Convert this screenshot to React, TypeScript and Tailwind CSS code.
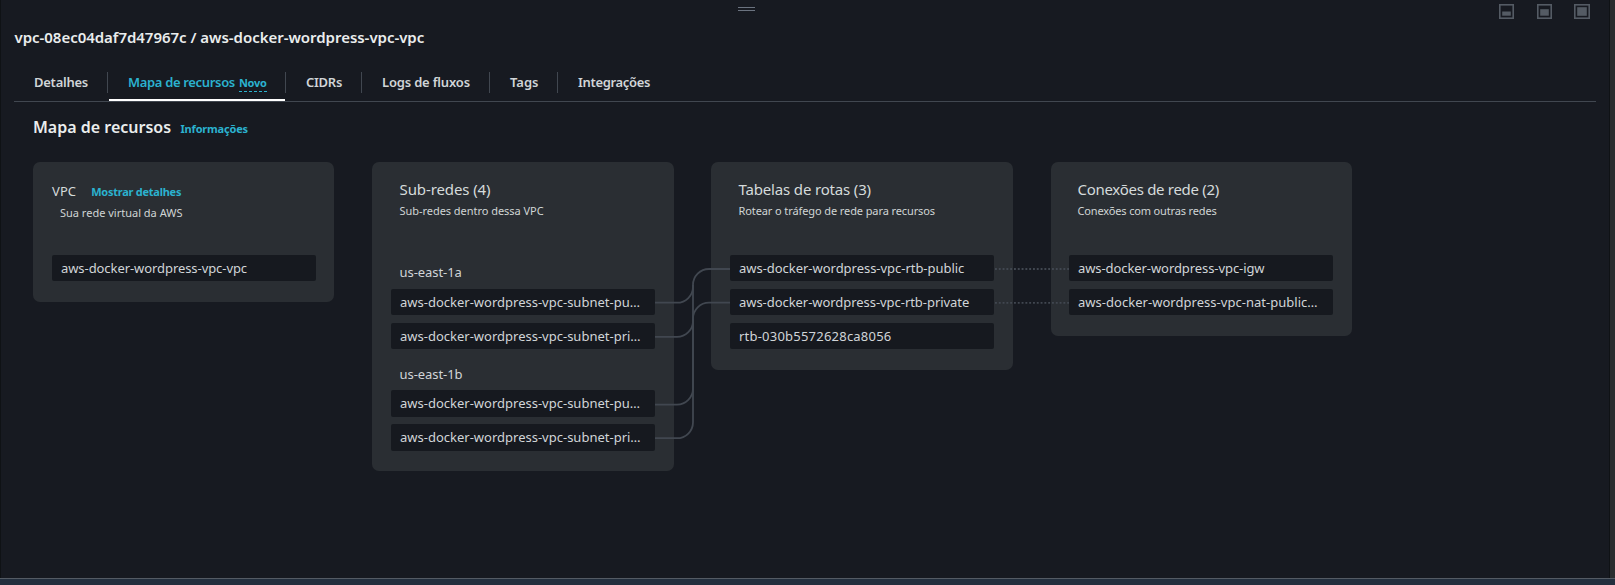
import type { ReactNode } from "react";

type Row = { text: string; h?: string; ls: string };

function Item({ text, ls, h = "h-[26px]" }: Row) {
  return (
    <div className={`${h} ${ls} flex items-center whitespace-nowrap rounded-[2px] bg-[#16191f] pl-[9px] text-[13px] leading-[18px] text-[#d1d5d8]`}>
      {text}
    </div>
  );
}

type CardProps = { title: string; titleLs: string; sub: string; subLs: string; size: string; children: ReactNode };

function Card({ title, titleLs, sub, subLs, size, children }: CardProps) {
  return (
    <section className={`${size} rounded-[7px] bg-[#2a2e33] pr-[19px] pt-[16px]`}>
      <div className="h-[77px] pl-[8.5px]">
        <h3 className={`${titleLs} whitespace-nowrap text-[15px] leading-[22px] text-[#d5dbdb]`}>{title}</h3>
        <p className={`${subLs} mt-[2px] whitespace-nowrap text-[11px] leading-[18px] text-[#d0d5d5]`}>{sub}</p>
      </div>
      {children}
    </section>
  );
}

const tabs = [
  { label: "Detalhes", w: "w-[94px]", ls: "tracking-[-0.25px]" },
  { label: "Mapa de recursos", w: "w-[178px]", ls: "tracking-[-0.33px]", active: true },
  { label: "CIDRs", w: "w-[76px]", ls: "tracking-[-0.25px]" },
  { label: "Logs de fluxos", w: "w-[128px]", ls: "tracking-[-0.18px]" },
  { label: "Tags", w: "w-[68px]", ls: "tracking-normal" },
  { label: "Integrações", w: "w-[92px]", ls: "tracking-[-0.33px]", last: true },
];

function SizeIcon({ y, h, w = 15 }: { y: number; h: number; w?: number }) {
  return (
    <svg width={w} height="15" viewBox={`0 0 ${w} 15`}>
      <rect x="0.8" y="0.8" width={w - 1.6} height="13.4" fill="none" stroke="#545b64" strokeWidth="1.6" />
      <rect x="3.2" y={y} width={w - 6.4} height={h} fill="#545b64" />
    </svg>
  );
}

function Links() {
  return (
    <svg className="pointer-events-none absolute left-[655px] top-[162px]" width="414" height="309" viewBox="655 162 414 309" fill="none" stroke="#414750" strokeWidth="1.8">
      <path d="M655 302.7H677A16 16 0 0 0 693 286.7V285A16 16 0 0 1 709 269H730" />
      <path d="M655 336.9H677A16 16 0 0 0 693 320.9V318.7A16 16 0 0 1 709 302.7H730" />
      <path d="M655 404.6H677A16 16 0 0 0 693 388.6V285" />
      <path d="M655 438.2H677A16 16 0 0 0 693 422.2V318.7" />
      <path d="M995 269H1069M995 302.8H1069" strokeDasharray="1.9 1.9" />
    </svg>
  );
}

export default function App() {
  return (
    <div className="relative flex h-[585px] w-[1615px] flex-col overflow-hidden bg-[#16191f] font-['Noto_Sans',sans-serif]">
      <div className="flex h-[578px]">
        <main className="h-full w-[1610px] border-l border-r border-[#0f1215] bg-[#171a21] pl-[13px]">
          <div className="flex h-[24px] justify-between">
            <div className="ml-[724px] mt-[7px] h-[4px] w-[17px] border-y border-[#6b7380]" />
            <div className="mr-[19px] mt-[4px] flex h-[15px] gap-[23px]">
              <SizeIcon y={7.5} h={4.2} />
              <SizeIcon y={5.2} h={6.5} />
              <div className="-ml-px">
                <SizeIcon y={3.2} h={8.6} w={16} />
              </div>
            </div>
          </div>
          <h1 className="h-[44px] whitespace-nowrap pl-[0.5px] pt-[3px] text-[15px] font-semibold leading-[20px] tracking-[-0.03px] text-[#eaeded]">
            vpc-08ec04daf7d47967c / aws-docker-wordpress-vpc-vpc
          </h1>
          <nav className="flex h-[34px] w-[1582px] border-b border-[#414750]">
            {tabs.map((t) => (
              <div key={t.label} className={`${t.w} relative flex h-[33px] shrink-0`}>
                <div className={`${t.ls} whitespace-nowrap pl-[20px] pt-[5px] text-[13px] font-semibold leading-[18px] ${t.active ? "text-[#2bb2cf]" : "text-[#d1d5d8]"}`}>
                  {t.label}
                  {t.active && (
                    <span className="ml-[4px] inline-block h-[18px] border-b border-dashed border-[#2bb2cf] text-[11px] font-bold leading-[18px] tracking-[-0.3px]">Novo</span>
                  )}
                </div>
                {!t.last && <span className="ml-auto mt-[4px] h-[21px] w-px bg-[#414750]" />}
                {t.active && <span className="absolute left-px top-[31px] h-[2px] w-[176px] bg-white" />}
              </div>
            ))}
          </nav>
          <div className="flex h-[60px] items-baseline pl-[19px] pt-[14px]">
            <h2 className="w-[147.5px] whitespace-nowrap text-[16px] font-semibold leading-[22px] text-[#eaeded]">Mapa de recursos</h2>
            <a className="whitespace-nowrap text-[11px] font-bold leading-[18px] tracking-[-0.18px] text-[#2bb2cf]">Informações</a>
          </div>
          <div className="grid grid-cols-[302px_302px_303px_301px] items-start gap-x-[37px] pl-[19px]">
            <section className="h-[140px] w-[301px] rounded-[7px] bg-[#2a2e33] pl-[19px] pr-[18px] pt-[19px]">
              <div className="h-[74px]">
                <div className="flex items-baseline gap-[15px]">
                  <h3 className="text-[13px] leading-[20px] tracking-[0.1px] text-[#d5dbdb]">VPC</h3>
                  <a className="whitespace-nowrap text-[11px] font-bold leading-[20px] tracking-[-0.25px] text-[#2bb2cf]">Mostrar detalhes</a>
                </div>
                <p className="mt-[2px] pl-[8px] text-[11px] leading-[18px] text-[#d0d5d5]">Sua rede virtual da AWS</p>
              </div>
              <Item text="aws-docker-wordpress-vpc-vpc" ls="tracking-[-0.07px]" />
            </section>
            <Card title="Sub-redes (4)" titleLs="tracking-[-0.1px]" sub="Sub-redes dentro dessa VPC" subLs="tracking-[-0.04px]" size="h-[309px] w-[302px] pl-[19px]">
              <div className="h-[34px] pl-[8.5px] pt-[7px] text-[13px] leading-[20px] tracking-[-0.06px] text-[#d1d5d8]">us-east-1a</div>
              <div className="flex flex-col gap-[8px]">
                <Item text="aws-docker-wordpress-vpc-subnet-pu…" ls="tracking-normal" />
                <Item text="aws-docker-wordpress-vpc-subnet-pri…" ls="tracking-normal" />
              </div>
              <div className="h-[41px] pl-[8.5px] pt-[15px] text-[13px] leading-[20px] tracking-[-0.06px] text-[#d1d5d8]">us-east-1b</div>
              <div className="flex flex-col gap-[7px]">
                <Item text="aws-docker-wordpress-vpc-subnet-pu…" ls="tracking-normal" h="h-[27px] pb-[2px]" />
                <Item text="aws-docker-wordpress-vpc-subnet-pri…" ls="tracking-normal" h="h-[27px] pb-[2px]" />
              </div>
            </Card>
            <Card title="Tabelas de rotas (3)" titleLs="tracking-[-0.16px]" sub="Rotear o tráfego de rede para recursos" subLs="tracking-[-0.1px]" size="h-[208px] w-[302px] pl-[19px]">
              <div className="flex flex-col gap-[8px]">
                <Item text="aws-docker-wordpress-vpc-rtb-public" ls="tracking-[-0.03px]" />
                <Item text="aws-docker-wordpress-vpc-rtb-private" ls="tracking-[-0.05px]" />
                <Item text="rtb-030b5572628ca8056" ls="tracking-[0.22px]" />
              </div>
            </Card>
            <Card title="Conexões de rede (2)" titleLs="tracking-[-0.29px]" sub="Conexões com outras redes" subLs="tracking-[-0.15px]" size="h-[174px] w-[301px] pl-[18px]">
              <div className="flex flex-col gap-[8px]">
                <Item text="aws-docker-wordpress-vpc-igw" ls="tracking-[-0.08px]" />
                <Item text="aws-docker-wordpress-vpc-nat-public…" ls="tracking-[0.03px]" />
              </div>
            </Card>
          </div>
          <Links />
        </main>
        <div className="w-[5px] bg-[#2a2d2f]" />
      </div>
      <footer className="h-[7px] border-t border-[#545b64] bg-[#232f3e]" />
    </div>
  );
}
